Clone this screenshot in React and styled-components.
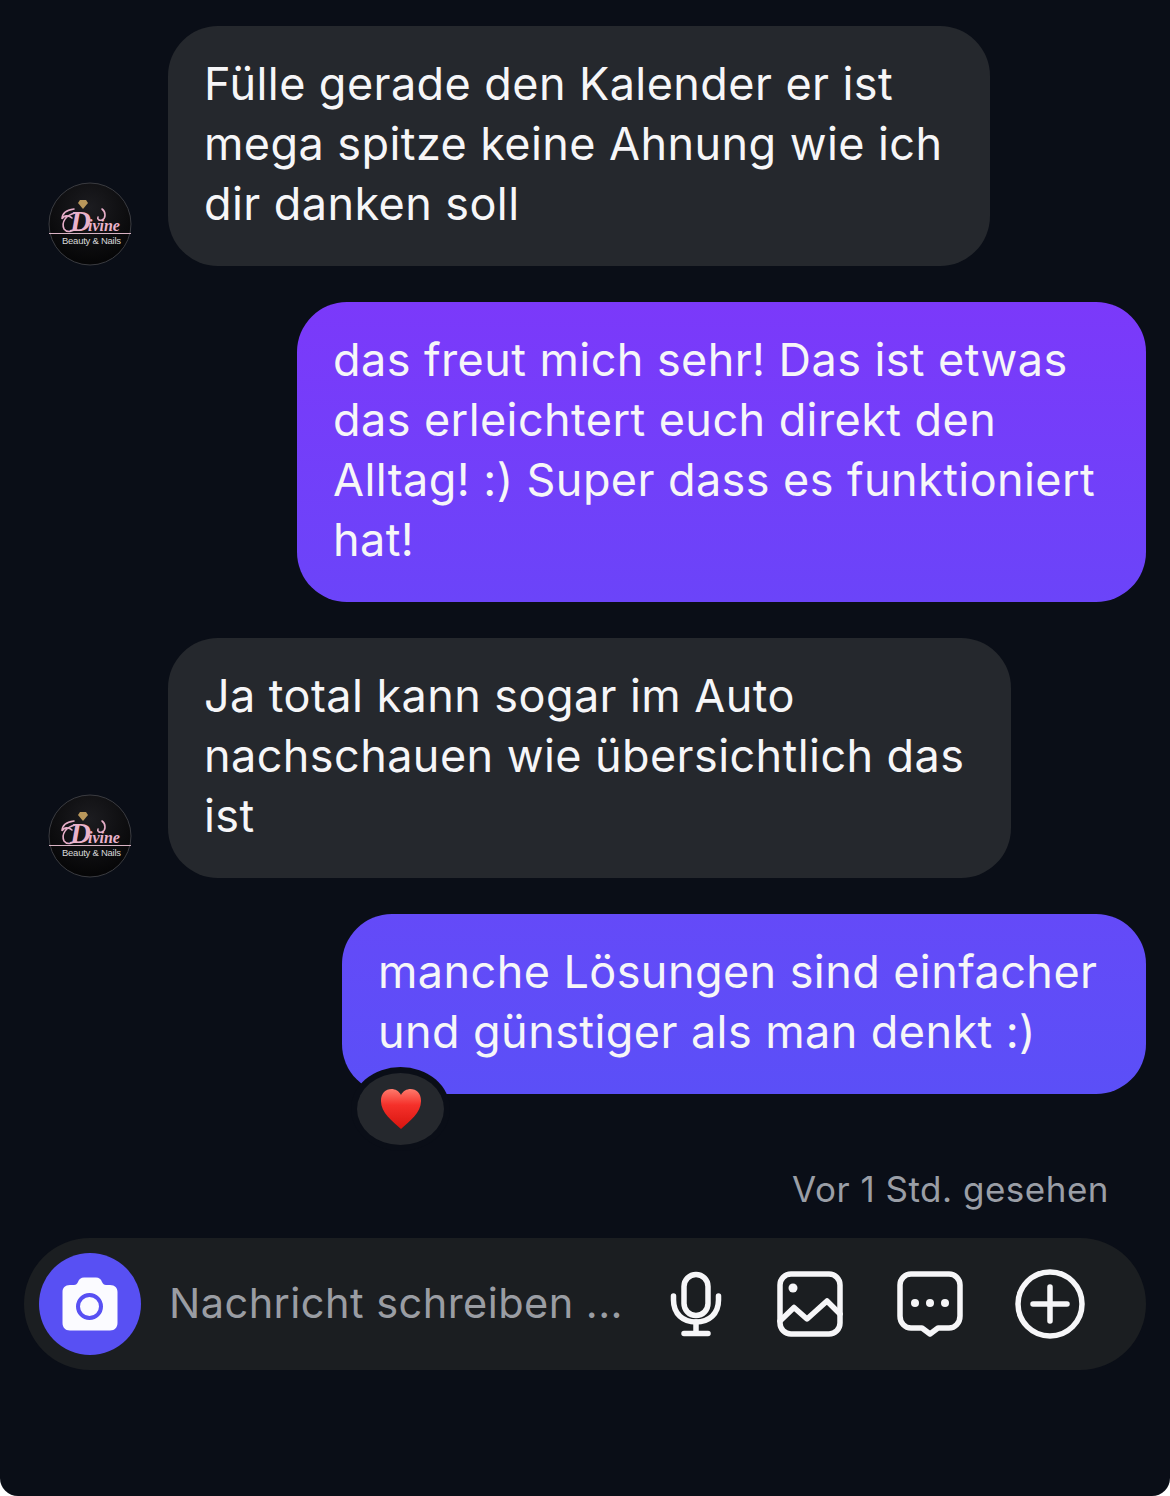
import React from "react";
import styled, { createGlobalStyle } from "styled-components";

const Global = createGlobalStyle`
  html, body { margin: 0; padding: 0; background: #fff; }
  #root { width: 1170px; }
`;

const Screen = styled.div`
  width: 1170px;
  height: 1496px;
  box-sizing: border-box;
  padding: 26px 24px 0 48px;
  background: #0a0e17;
  border-radius: 0 0 18px 18px;
  display: flex;
  flex-direction: column;
  font-family: Inter, "Liberation Sans", sans-serif;
  overflow: hidden;
`;

const Thread = styled.div`
  display: flex;
  flex-direction: column;
  gap: 36px;
`;

const IncomingRow = styled.div`
  display: flex;
  align-items: flex-end;
  gap: 36px;
`;

const OutgoingRow = styled.div`
  display: flex;
  justify-content: flex-end;
  position: relative;
`;

const Bubble = styled.div`
  box-sizing: border-box;
  width: ${(p) => p.$width}px;
  padding: 28px 0 32px 36px;
  border-radius: 50px;
  font-size: 45px;
  line-height: 60px;
  letter-spacing: 0.42px;
  white-space: nowrap;
  color: #f6f6f8;
  background: ${(p) => p.$background || "#25282d"};
`;

const Line = styled.div``;

const AvatarRing = styled.div`
  width: 84px;
  height: 84px;
  flex: none;
`;

const Reaction = styled.div`
  position: absolute;
  left: 309px;
  bottom: -51px;
  width: 87px;
  height: 72px;
  border-radius: 50%;
  background: #25282d;
  display: flex;
  align-items: center;
  justify-content: center;
  box-shadow: 0 0 0 6px #0a0e17;
`;

const Seen = styled.div`
  margin-top: 73px;
  padding-right: 37px;
  text-align: right;
  font-size: 35px;
  line-height: 44px;
  letter-spacing: 0.5px;
  color: #9a9ea6;
`;

const Composer = styled.div`
  margin-top: 27px;
  width: 1122px;
  margin-left: -24px;
  height: 132px;
  box-sizing: border-box;
  padding: 0 61px 0 15px;
  border-radius: 66px;
  background: #1b1e21;
  display: flex;
  align-items: center;
`;

const CameraButton = styled.div`
  width: 102px;
  height: 102px;
  flex: none;
  border-radius: 50%;
  background: #5850f3;
  display: flex;
  align-items: center;
  justify-content: center;
`;

const Placeholder = styled.div`
  margin-left: 28px;
  padding-bottom: 2px;
  font-size: 41.5px;
  letter-spacing: 0.45px;
  color: #9a9da3;
  white-space: nowrap;
`;

const Actions = styled.div`
  margin-left: auto;
  display: flex;
  align-items: center;
  gap: 50px;
`;

const Avatar = () => (
  <AvatarRing>
    <svg width="84" height="84" viewBox="0 0 84 84">
      <defs>
        <radialGradient id="disc" cx="50%" cy="30%" r="70%">
          <stop offset="0%" stopColor="#1c1c20" />
          <stop offset="100%" stopColor="#050506" />
        </radialGradient>
      </defs>
      <circle cx="42" cy="42" r="41" fill="url(#disc)" stroke="#3a3b40" strokeWidth="1" />
      <path d="M30 21 L32 18 L38 18 L40 21 L35 27 Z" fill="#b9975b" />
      <path
        d="M24 36 C21 33 16 33 14 37 C14 31 19 28 26 27 M27 31 C18 33 13 40 16 47 C19 51 25 50 28 46 M50 35 C49 37 51 39 54 38 C58 36 58 30 54 27"
        fill="none"
        stroke="#e6aec8"
        strokeWidth="1.600"
        strokeLinecap="round"
      />
      <text x="22" y="49" fontFamily="Liberation Serif, serif" fontStyle="italic" fontWeight="700" fontSize="16" fill="#eab3cb">
        <tspan fontSize="29">D</tspan>
        <tspan dx="-3">ivine</tspan>
      </text>
      <rect x="1" y="51" width="82" height="1" fill="#d9b3c4" />
      <text x="14" y="62" fontFamily="Liberation Sans, sans-serif" fontSize="9.500" fill="#d8d8d8" textLength="59">
        Beauty &amp; Nails
      </text>
    </svg>
  </AvatarRing>
);

const Heart = () => (
  <svg width="42" height="42" viewBox="0 0 44 42" preserveAspectRatio="none">
    <defs>
      <linearGradient id="heart" x1="0" y1="0" x2="0" y2="1">
        <stop offset="0%" stopColor="#ff7a6c" />
        <stop offset="40%" stopColor="#f5302a" />
        <stop offset="100%" stopColor="#d8150f" />
      </linearGradient>
    </defs>
    <path d="M22 41 C13 33 1 25 1 13 C1 5 6 1 12 1 C16 1 20 3 22 7 C24 3 28 1 32 1 C38 1 43 5 43 13 C43 25 31 33 22 41 Z" fill="url(#heart)" />
  </svg>
);

const CameraIcon = () => (
  <svg width="56" height="54" viewBox="0 0 56 54">
    <path d="M8 8 H12 C14 8 15 7 16 5 C17 2 19 .5 22 .5 H34 C37 .5 39 2 40 5 C41 7 42 8 44 8 H48 C53 8 55.500 11 55.500 15 V46 C55.500 50 53 53.500 48 53.500 H8 C3 53.500 .5 50 .5 46 V15 C.5 11 3 8 8 8 Z" fill="#fbfbff" />
    <circle cx="27.500" cy="29.500" r="11.500" fill="none" stroke="#5850f3" strokeWidth="4" />
  </svg>
);

const MicIcon = () => (
  <svg width="58" height="70" viewBox="0 0 58 70" fill="none" stroke="#f6f6f8" strokeWidth="5.500" strokeLinecap="round">
    <rect x="17" y="5.500" width="24" height="41" rx="12" />
    <path d="M6.500 27 V31 C6.500 45 16 53 29 53 C42 53 51.500 45 51.500 31 V27" />
    <path d="M29 53 V64 M17 64.500 H41" />
  </svg>
);

const ImageIcon = () => (
  <svg width="70" height="70" viewBox="0 0 70 70" fill="none" stroke="#f6f6f8" strokeWidth="5.500" strokeLinecap="round" strokeLinejoin="round">
    <rect x="5" y="5" width="60" height="60" rx="11" />
    <circle cx="18" cy="19" r="4.500" fill="#f6f6f8" stroke="none" />
    <path d="M5 52 L19 38.500 L32 50 L52 32 L65 45" />
  </svg>
);

const ChatIcon = () => (
  <svg width="70" height="70" viewBox="0 0 70 70" fill="none" stroke="#f6f6f8" strokeWidth="5.500" strokeLinecap="round" strokeLinejoin="round">
    <path d="M16 5 H54 C60 5 65 10 65 16 V47 C65 54 60 59 54 59 H43 L35 65 L27 59 H16 C10 59 5 54 5 47 V16 C5 10 10 5 16 5 Z" />
    <circle cx="20" cy="34" r="4" fill="#f6f6f8" stroke="none" />
    <circle cx="35" cy="34" r="4" fill="#f6f6f8" stroke="none" />
    <circle cx="50" cy="34" r="4" fill="#f6f6f8" stroke="none" />
  </svg>
);

const PlusIcon = () => (
  <svg width="70" height="70" viewBox="0 0 70 70" fill="none" stroke="#f6f6f8" strokeWidth="5.500" strokeLinecap="round">
    <circle cx="35" cy="35" r="32" />
    <path d="M35 18 V52 M18 35 H52" />
  </svg>
);

const messages = [
  { side: "in", width: 822, lines: ["Fülle gerade den Kalender er ist", "mega spitze keine Ahnung wie ich", "dir danken soll"] },
  { side: "out", width: 849, background: "linear-gradient(180deg, #7b39fa 0%, #6b44f9 100%)", lines: ["das freut mich sehr! Das ist etwas", "das erleichtert euch direkt den", "Alltag! :) Super dass es funktioniert", "hat!"] },
  { side: "in", width: 843, lines: ["Ja total kann sogar im Auto", "nachschauen wie übersichtlich das", "ist"] },
  { side: "out", width: 804, reaction: true, background: "linear-gradient(180deg, #644af8 0%, #5b4ff7 100%)", lines: ["manche Lösungen sind einfacher", "und günstiger als man denkt :)"] },
];

export default function App() {
  return (
    <>
      <Global />
      <Screen>
        <Thread>
          {messages.map((m, i) => {
            const bubble = (
              <Bubble $width={m.width} $background={m.background}>
                {m.lines.map((l) => (
                  <Line key={l}>{l}</Line>
                ))}
              </Bubble>
            );
            return m.side === "in" ? (
              <IncomingRow key={i}>
                <Avatar />
                {bubble}
              </IncomingRow>
            ) : (
              <OutgoingRow key={i}>
                {bubble}
                {m.reaction && (
                  <Reaction>
                    <Heart />
                  </Reaction>
                )}
              </OutgoingRow>
            );
          })}
        </Thread>
        <Seen>Vor 1 Std. gesehen</Seen>
        <Composer>
          <CameraButton>
            <CameraIcon />
          </CameraButton>
          <Placeholder>Nachricht schreiben ...</Placeholder>
          <Actions>
            <MicIcon />
            <ImageIcon />
            <ChatIcon />
            <PlusIcon />
          </Actions>
        </Composer>
      </Screen>
    </>
  );
}
